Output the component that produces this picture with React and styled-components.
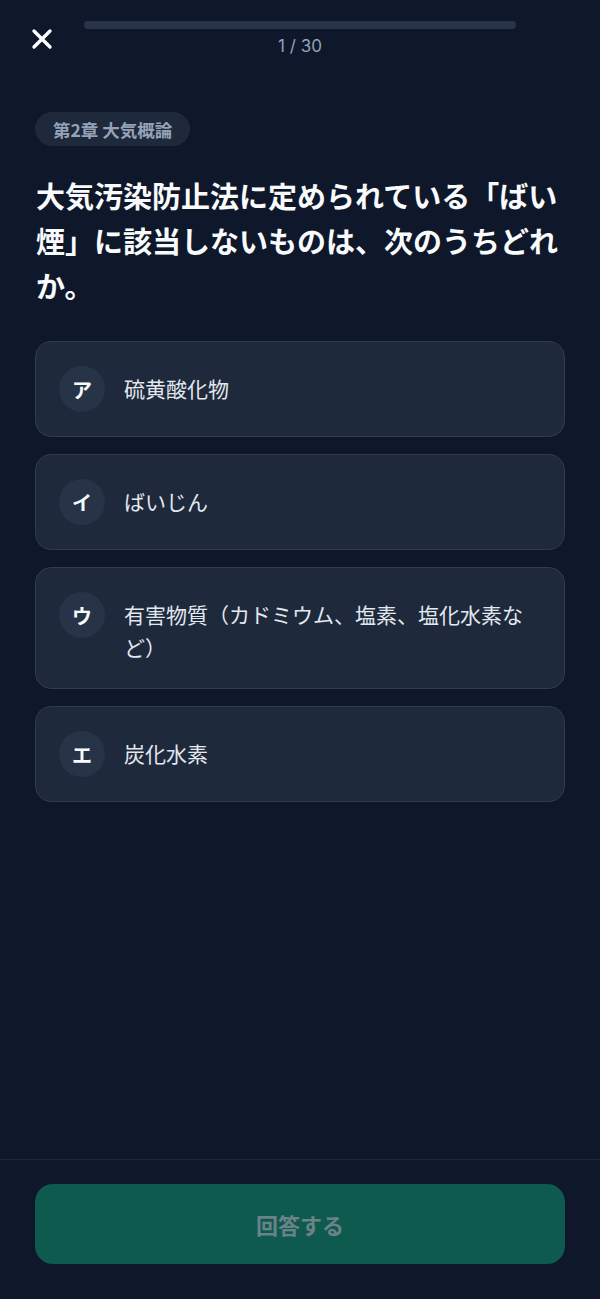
import React from "react";
import styled, { createGlobalStyle } from "styled-components";

const Global = createGlobalStyle`
  html, body { margin: 0; padding: 0; background: #0f172a; }
  body { font-family: "Noto Sans CJK JP", "Noto Sans", Inter, sans-serif; -webkit-font-smoothing: antialiased; }
  * { box-sizing: border-box; }
`;

const Page = styled.div`
  min-height: 100vh;
  display: flex;
  flex-direction: column;
  background: #0f172a;
  color: #f8fafc;
`;

const Header = styled.header`
  display: grid;
  grid-template-columns: 84px 1fr 84px;
  align-items: start;
  padding-top: 21px;
`;

const CloseButton = styled.button`
  width: 44px;
  height: 44px;
  margin: -4px 0 0 20px;
  padding: 0;
  border: none;
  background: transparent;
  display: flex;
  align-items: center;
  justify-content: center;
  color: #fff;
`;

const ProgressCol = styled.div`
  display: flex;
  flex-direction: column;
  align-items: center;
  gap: 7px;
`;

const Track = styled.div`
  width: 100%;
  height: 8px;
  border-radius: 4px;
  background: #283447;
  overflow: hidden;
`;

const Fill = styled.div`
  height: 100%;
  background: #10b981;
`;

const Counter = styled.div`
  font-family: Inter, "Noto Sans", sans-serif;
  font-size: 17px;
  line-height: 20px;
  color: #94a3b8;
`;

const Main = styled.main`
  flex: 1;
  padding: 51px 35px 0;
  display: flex;
  flex-direction: column;
`;

const Chip = styled.span`
  align-self: flex-start;
  height: 34px;
  padding: 0 18px;
  border-radius: 17px;
  background: #1e293b;
  color: #94a3b8;
  font-size: 17.5px;
  font-weight: 700;
  display: inline-flex;
  align-items: center;
`;

const Question = styled.h1`
  margin: 27px 0 0;
  padding-left: 1px;
  font-size: 29px;
  line-height: 45px;
  font-weight: 700;
  color: #f8fafc;
`;

const Options = styled.div`
  margin-top: 33px;
  display: flex;
  flex-direction: column;
  gap: 17px;
`;

const Option = styled.button`
  width: 100%;
  display: flex;
  align-items: flex-start;
  gap: 19px;
  padding: 24px 23px;
  border: 1px solid #2f3b50;
  border-radius: 16px;
  background: #1e293b;
  text-align: left;
  font-family: inherit;
  cursor: pointer;
`;

const Letter = styled.span`
  flex: none;
  width: 46px;
  height: 46px;
  border-radius: 50%;
  background: #273447;
  color: #f8fafc;
  font-size: 20px;
  font-weight: 700;
  display: flex;
  align-items: center;
  justify-content: center;
`;

const OptionText = styled.span`
  flex: 1;
  margin-top: 6px;
  font-size: 21px;
  line-height: 33px;
  color: #e2e8f0;
`;

const Footer = styled.footer`
  border-top: 1px solid #1e293b;
  padding: 24px 35px 35px;
`;

const Submit = styled.button`
  width: 100%;
  height: 80px;
  border: none;
  border-radius: 18px;
  background: #0f5a4f;
  color: #6b8387;
  font-family: inherit;
  font-size: 22px;
  font-weight: 700;
`;

const options = [
  { k: "ア", t: "硫黄酸化物" },
  { k: "イ", t: "ばいじん" },
  { k: "ウ", t: "有害物質（カドミウム、塩素、塩化水素など）" },
  { k: "エ", t: "炭化水素" },
];

export default function App() {
  return (
    <Page>
      <Global />
      <Header>
        <CloseButton aria-label="閉じる">
          <svg width="22" height="22" viewBox="0 0 22 22" fill="none" stroke="currentColor" strokeWidth="3.4" strokeLinecap="round">
            <path d="M3 3L19 19M19 3L3 19" />
          </svg>
        </CloseButton>
        <ProgressCol>
          <Track>
            <Fill style={{ width: `${(0 / 30) * 100}%` }} />
          </Track>
          <Counter>1 / 30</Counter>
        </ProgressCol>
        <div />
      </Header>
      <Main>
        <Chip>第2章 大気概論</Chip>
        <Question>大気汚染防止法に定められている「ばい煙」に該当しないものは、次のうちどれか。</Question>
        <Options>
          {options.map((o) => (
            <Option key={o.k}>
              <Letter>{o.k}</Letter>
              <OptionText>{o.t}</OptionText>
            </Option>
          ))}
        </Options>
      </Main>
      <Footer>
        <Submit disabled>回答する</Submit>
      </Footer>
    </Page>
  );
}
